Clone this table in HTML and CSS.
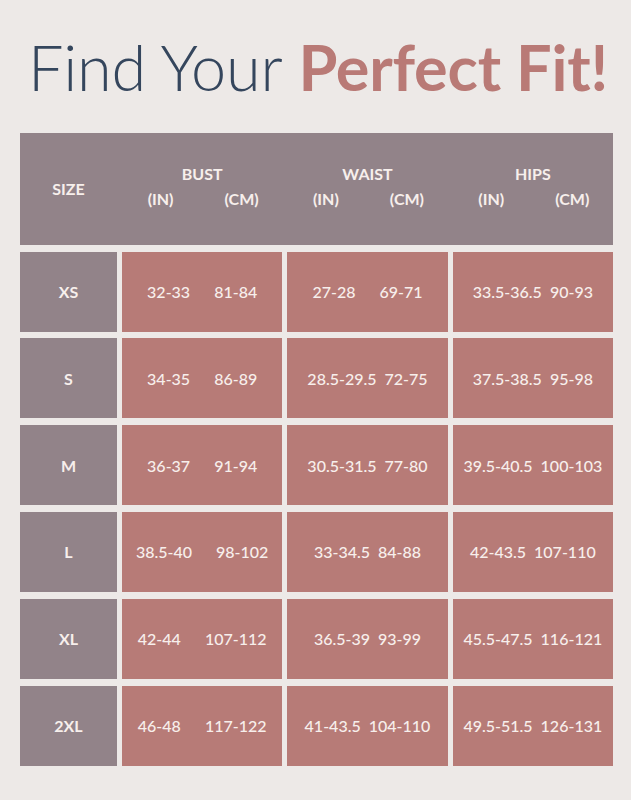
FILE: index.html
```html
<!DOCTYPE html>
<html lang="en">
<head>
<meta charset="utf-8">
<title>Size Chart</title>
<link rel="stylesheet" href="styles.css">
</head>
<body>
<main class="page">
  <h1 class="title"><span class="light">Find Your</span> <span class="bold">Perfect Fit!</span></h1>
  <section class="chart">
    <div class="head">
      <div class="hcell size-label">SIZE</div>
      <div class="hcell"><div class="hgroup"><div>BUST</div><div class="units"><span>(IN)</span><span>(CM)</span></div></div></div>
      <div class="hcell"><div class="hgroup"><div>WAIST</div><div class="units"><span>(IN)</span><span>(CM)</span></div></div></div>
      <div class="hcell"><div class="hgroup"><div>HIPS</div><div class="units"><span>(IN)</span><span>(CM)</span></div></div></div>
    </div>
    <div class="rows">
      <div class="size">XS</div>
      <div class="cell wide"><span>32-33</span><span>81-84</span></div>
      <div class="cell wide"><span>27-28</span><span>69-71</span></div>
      <div class="cell"><span>33.5-36.5</span><span>90-93</span></div>

      <div class="size">S</div>
      <div class="cell wide"><span>34-35</span><span>86-89</span></div>
      <div class="cell"><span>28.5-29.5</span><span>72-75</span></div>
      <div class="cell"><span>37.5-38.5</span><span>95-98</span></div>

      <div class="size">M</div>
      <div class="cell wide"><span>36-37</span><span>91-94</span></div>
      <div class="cell"><span>30.5-31.5</span><span>77-80</span></div>
      <div class="cell"><span>39.5-40.5</span><span>100-103</span></div>

      <div class="size">L</div>
      <div class="cell wide"><span>38.5-40</span><span>98-102</span></div>
      <div class="cell"><span>33-34.5</span><span>84-88</span></div>
      <div class="cell"><span>42-43.5</span><span>107-110</span></div>

      <div class="size">XL</div>
      <div class="cell wide"><span>42-44</span><span>107-112</span></div>
      <div class="cell"><span>36.5-39</span><span>93-99</span></div>
      <div class="cell"><span>45.5-47.5</span><span>116-121</span></div>

      <div class="size">2XL</div>
      <div class="cell wide"><span>46-48</span><span>117-122</span></div>
      <div class="cell"><span>41-43.5</span><span>104-110</span></div>
      <div class="cell"><span>49.5-51.5</span><span>126-131</span></div>
    </div>
  </section>
</main>
</body>
</html>
```

FILE: styles.css
```css
* { box-sizing: border-box; }

html, body {
  margin: 0;
  padding: 0;
}

body {
  background: #ede9e7;
  font-family: Lato, "Open Sans", "DejaVu Sans", sans-serif;
  color: #f7efec;
}

.page {
  width: 631px;
  height: 800px;
  padding-top: 29px;
}

.title {
  margin: 0 0 28px 0;
  padding-left: 5px;
  text-align: center;
  font-size: 63px;
  line-height: 1.2;
  font-weight: 400;
  white-space: nowrap;
  letter-spacing: -0.2px;
}

.title .light {
  font-weight: 300;
  color: #35465d;
}

.title .bold {
  font-weight: 700;
  color: #b97a76;
}

.chart {
  margin-left: 20px;
  width: 593px;
}

.head,
.rows {
  display: grid;
  grid-template-columns: 97px repeat(3, 1fr);
  column-gap: 5px;
}

.head {
  height: 112px;
  background: #928389;
  font-weight: 700;
  font-size: 16px;
}

.hcell {
  display: flex;
  align-items: center;
  justify-content: center;
}

.hgroup {
  display: flex;
  flex-direction: column;
  align-items: center;
  line-height: 25px;
  padding-bottom: 6px;
}

.units {
  display: flex;
  gap: 51px;
  padding-left: 2px;
}

.rows {
  margin-top: 7px;
  grid-auto-rows: 80px;
  row-gap: 6.8px;
  font-size: 16px;
}

.size {
  background: #928389;
  font-weight: 700;
  display: flex;
  align-items: center;
  justify-content: center;
}

.cell {
  background: #b77b77;
  display: flex;
  align-items: center;
  justify-content: center;
  gap: 8px;
  font-weight: 500;
}

.cell.wide {
  gap: 24px;
}
```
